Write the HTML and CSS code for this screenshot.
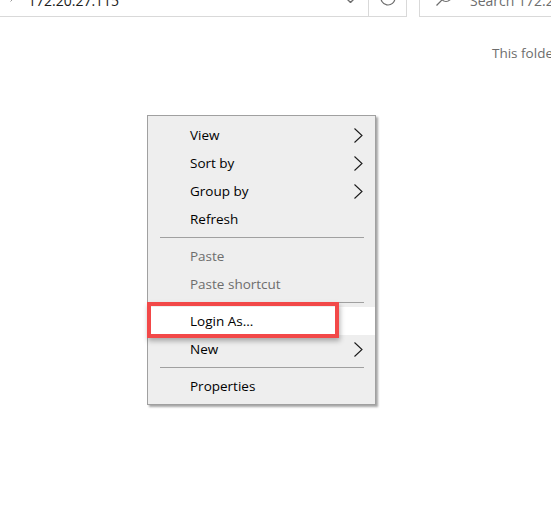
FILE: index.html
```html
<!DOCTYPE html>
<html lang="en">
<head>
  <meta charset="UTF-8" />
  <meta name="viewport" content="width=device-width, initial-scale=1.0" />
  <title>172.20.27.115</title>
  <link rel="stylesheet" href="styles.css">
</head>
<body>
  <div class="toolbar">
    <div class="address">
      <svg class="crumb" width="5" height="8" viewBox="0 0 5 8"><polyline points="0.5,0.5 4,4 0.5,7.5" fill="none" stroke="#9a9a9a" stroke-width="1"/></svg>
      <span class="address-text">172.20.27.115</span>
      <svg class="dropdown" width="9" height="5" viewBox="0 0 9 5"><polyline points="0.5,0.5 4.5,4.5 8.5,0.5" fill="none" stroke="#6d6d6d" stroke-width="1.4"/></svg>
      <div class="refresh">
        <svg width="18" height="18" viewBox="0 0 18 18"><path d="M16 9 A7 7 0 1 1 12.5 2.9" fill="none" stroke="#6d6d6d" stroke-width="1.2"/></svg>
      </div>
    </div>
    <div class="search">
      <svg class="search-icon" width="18" height="16" viewBox="0 0 18 16"><circle cx="11" cy="3" r="5.5" fill="none" stroke="#6d6d6d" stroke-width="1.2"/><line x1="7.1" y1="6.9" x2="1.5" y2="12.5" stroke="#6d6d6d" stroke-width="1.3"/></svg>
      <span class="search-text">Search 172.20.27.115</span>
    </div>
  </div>

  <div class="folder-view">
    <p class="empty-note">This folder is empty.</p>
  </div>

  <ul class="context-menu">
    <li class="item">View <svg class="arrow" width="9" height="15" viewBox="0 0 9 15"><polyline points="0.5,0.5 8,7.5 0.5,14.5" fill="none" stroke="#1a1a1a" stroke-width="1.1"/></svg></li>
    <li class="item">Sort by <svg class="arrow" width="9" height="15" viewBox="0 0 9 15"><polyline points="0.5,0.5 8,7.5 0.5,14.5" fill="none" stroke="#1a1a1a" stroke-width="1.1"/></svg></li>
    <li class="item">Group by <svg class="arrow" width="9" height="15" viewBox="0 0 9 15"><polyline points="0.5,0.5 8,7.5 0.5,14.5" fill="none" stroke="#1a1a1a" stroke-width="1.1"/></svg></li>
    <li class="item">Refresh</li>
    <li class="separator"></li>
    <li class="item disabled">Paste</li>
    <li class="item disabled">Paste shortcut</li>
    <li class="separator"></li>
    <li class="item hovered">Login As...<span class="highlight-box"></span></li>
    <li class="item">New <svg class="arrow" width="9" height="15" viewBox="0 0 9 15"><polyline points="0.5,0.5 8,7.5 0.5,14.5" fill="none" stroke="#1a1a1a" stroke-width="1.1"/></svg></li>
    <li class="separator"></li>
    <li class="item">Properties</li>
  </ul>
</body>
</html>
```

FILE: styles.css
```css
body {
  margin: 0;
  background-color: #fff;
  font-family: 'Open Sans', 'Segoe UI', sans-serif;
  font-size: 13.5px;
  color: #000;
  overflow: hidden;
}

.toolbar {
  display: flex;
  gap: 12px;
  height: 33px;
  margin-top: -16px;
}

.address {
  flex: 0 0 408px;
  margin-left: -1px;
  display: flex;
  align-items: center;
  box-sizing: border-box;
  border: 1px solid #d9d9d9;
  padding-left: 10px;
}

.crumb {
  margin-top: -6px;
}

.address-text {
  margin-left: 13px;
  font-size: 14px;
  color: #1a1a1a;
}

.dropdown {
  margin-left: auto;
  margin-right: 13px;
  margin-top: 0;
}

.refresh {
  width: 37px;
  height: 100%;
  border-left: 1px solid #d9d9d9;
  display: flex;
  align-items: center;
  justify-content: center;
}

.refresh svg {
  margin-top: -6px;
}

.search {
  flex: 1 0 auto;
  display: flex;
  align-items: center;
  box-sizing: border-box;
  border: 1px solid #d9d9d9;
  border-right: none;
  padding-left: 15px;
  white-space: nowrap;
}

.search-text {
  margin-left: 17px;
  font-size: 14px;
  color: #6d6d6d;
}

.folder-view {
  white-space: nowrap;
}

.empty-note {
  margin: 26px 0 0 492px;
  line-height: 20px;
  color: #6d6d6d;
}

/* right-click menu */
.context-menu {
  position: absolute;
  left: 147px;
  top: 115px;
  width: 229px;
  box-sizing: border-box;
  margin: 0;
  padding: 5px 0 4px;
  list-style: none;
  background-color: #eeeeee;
  border: 1px solid #a0a0a0;
  box-shadow: 2px 2px 2px rgba(0, 0, 0, 0.35);
}

.item {
  position: relative;
  display: flex;
  align-items: center;
  height: 28px;
  padding: 0 12px 0 42px;
}

.item .arrow {
  margin-left: auto;
}

.disabled {
  color: #6d6d6d;
}

.hovered {
  background-color: #fff;
}

.separator {
  margin: 4px 11px 4px 12px;
  border-top: 1px solid #a0a0a0;
}

.highlight-box {
  position: absolute;
  left: -1px;
  top: -5px;
  width: 192px;
  height: 36px;
  box-sizing: border-box;
  border: 4px solid #f24848;
  box-shadow: 1px 3px 5px rgba(0, 0, 0, 0.3);
}
```
